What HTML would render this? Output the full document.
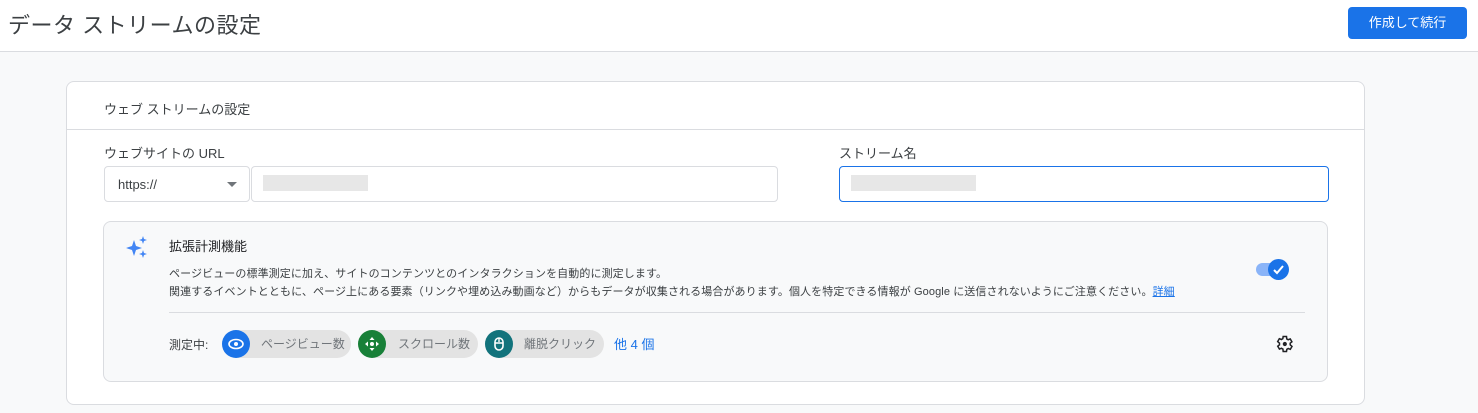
<!DOCTYPE html>
<html><head><meta charset="utf-8"><style>
*{box-sizing:border-box;margin:0;padding:0}
body{width:1478px;height:413px;overflow:hidden;background:#f8f9fa;font-family:"Liberation Sans","Noto Sans CJK JP",sans-serif;color:#202124;position:relative}
.a{position:absolute}
.hdr{left:0;top:0;width:1478px;height:52px;background:#fff;border-bottom:1px solid #dadce0}
.t{left:8px;top:8px;font-size:22px;color:#3c4043;letter-spacing:0.5px}
.btn{left:1348px;top:7px;width:119px;height:32px;background:#1a73e8;border-radius:4px;color:#fff;font-size:13px;text-align:center;line-height:32px}
.card{left:66px;top:81px;width:1299px;height:324px;background:#fff;border:1px solid #dadce0;border-radius:8px}
.inp{height:36px;border:1px solid #dadce0;border-radius:4px;background:#fff}
.blur{background:#ddd;height:16px;opacity:.7}
.box{left:103px;top:221px;width:1225px;height:161px;background:#f8f9fa;border:1px solid #dadce0;border-radius:8px}
.chip{height:28px;border-radius:14px;background:#e3e3e3;font-size:12px;color:#70757a;line-height:28px}
.ci{position:absolute;left:0;top:0;width:28px;height:28px;border-radius:50%}
</style></head><body>
<div class="a hdr"></div>
<div class="a t">データ ストリームの設定</div>
<div class="a btn">作成して続行</div>
<div class="a card"></div>
<div class="a" style="left:104px;top:99px;font-size:13px;color:#3c4043">ウェブ ストリームの設定</div>
<div class="a" style="left:67px;top:129px;width:1297px;height:1px;background:#dadce0"></div>
<div class="a" style="left:104px;top:143px;font-size:13px;color:#3c4043">ウェブサイトの URL</div>
<div class="a" style="left:839px;top:143px;font-size:13px;color:#3c4043">ストリーム名</div>
<div class="a inp" style="left:104px;top:166px;width:146px"></div>
<div class="a" style="left:118px;top:177px;font-size:13px;color:#3c4043">https://</div>
<div class="a" style="left:227px;top:182px;width:0;height:0;border-left:5px solid transparent;border-right:5px solid transparent;border-top:5px solid #70757a"></div>
<div class="a inp" style="left:251px;top:166px;width:527px"></div>
<div class="a blur" style="left:263px;top:175px;width:105px"></div>
<div class="a inp" style="left:839px;top:166px;width:490px;border-color:#1a73e8"></div>
<div class="a blur" style="left:851px;top:175px;width:125px"></div>
<div class="a box"></div>
<svg class="a" style="left:126px;top:236px" width="22" height="22" viewBox="0 0 22 22"><path d="M8 4 L10 10 L16 12 L10 14 L8 20 L6 14 L0 12 L6 10Z" fill="#4285f4"/><path d="M17 0 L18 3 L21 4 L18 5 L17 8 L16 5 L13 4 L16 3Z" fill="#4285f4"/><path d="M17 14 L18 17 L21 18 L18 19 L17 22 L16 19 L13 18 L16 17Z" fill="#4285f4"/></svg>
<div class="a" style="left:169px;top:236px;font-size:13px">拡張計測機能</div>
<div class="a" style="left:169px;top:265px;font-size:11px;color:#3c4043;line-height:18px;letter-spacing:0.1px">ページビューの標準測定に加え、サイトのコンテンツとのインタラクションを自動的に測定します。<br>関連するイベントとともに、ページ上にある要素（リンクや埋め込み動画など）からもデータが収集される場合があります。個人を特定できる情報が Google に送信されないようにご注意ください。<span style="color:#1a73e8;text-decoration:underline">詳細</span></div>
<div class="a" style="left:1256px;top:263px;width:30px;height:13px;border-radius:7px;background:#8ab4f8"></div>
<div class="a" style="left:1268px;top:259px;width:21px;height:21px;border-radius:50%;background:#1a73e8"></div>
<svg class="a" style="left:1268px;top:259px" width="21" height="21"><path d="M6 11 L9 14 L15 7" stroke="#fff" stroke-width="2" fill="none"/></svg>
<div class="a" style="left:169px;top:312px;width:1136px;height:1px;background:#dadce0"></div>
<div class="a" style="left:169px;top:336px;font-size:12px;color:#3c4043">測定中:</div>
<div class="a chip" style="left:222px;top:330px;width:129px;padding-left:39px">ページビュー数<div class="ci" style="background:#1a73e8"><svg width="28" height="28"><ellipse cx="14" cy="14" rx="7" ry="4.5" stroke="#fff" stroke-width="1.6" fill="none"/><circle cx="14" cy="14" r="2" fill="#fff"/></svg></div></div>
<div class="a chip" style="left:358px;top:330px;width:120px;padding-left:40px">スクロール数<div class="ci" style="background:#188038"><svg width="28" height="28"><circle cx="14" cy="14" r="2" fill="#fff"/><path d="M14 7l-2.5 3h5zM14 21l-2.5-3h5zM7 14l3-2.5v5zM21 14l-3-2.5v5z" fill="#fff"/></svg></div></div>
<div class="a chip" style="left:485px;top:330px;width:119px;padding-left:39px">離脱クリック<div class="ci" style="background:#12737c"><svg width="28" height="28"><rect x="10" y="8" width="8" height="12" rx="4" stroke="#fff" stroke-width="1.6" fill="none"/><path d="M14 8v4M10 13h8" stroke="#fff" stroke-width="1.4"/></svg></div></div>
<div class="a" style="left:614px;top:334px;font-size:13px;color:#1a73e8">他 4 個</div>
<svg class="a" style="left:1274px;top:334px" width="20" height="20" viewBox="0 0 24 24"><path d="M19.4 13a7.5 7.5 0 000-2l2.1-1.6-2-3.5-2.5 1a7 7 0 00-1.7-1L15 3h-4l-.4 2.6a7 7 0 00-1.7 1l-2.5-1-2 3.5L6.6 11a7.5 7.5 0 000 2l-2.1 1.6 2 3.5 2.5-1a7 7 0 001.7 1L11 21h4l.4-2.6a7 7 0 001.7-1l2.5 1 2-3.5z" stroke="#202124" stroke-width="1.8" fill="none"/><circle cx="13" cy="12" r="2.5" fill="#202124"/></svg>
</body></html>
